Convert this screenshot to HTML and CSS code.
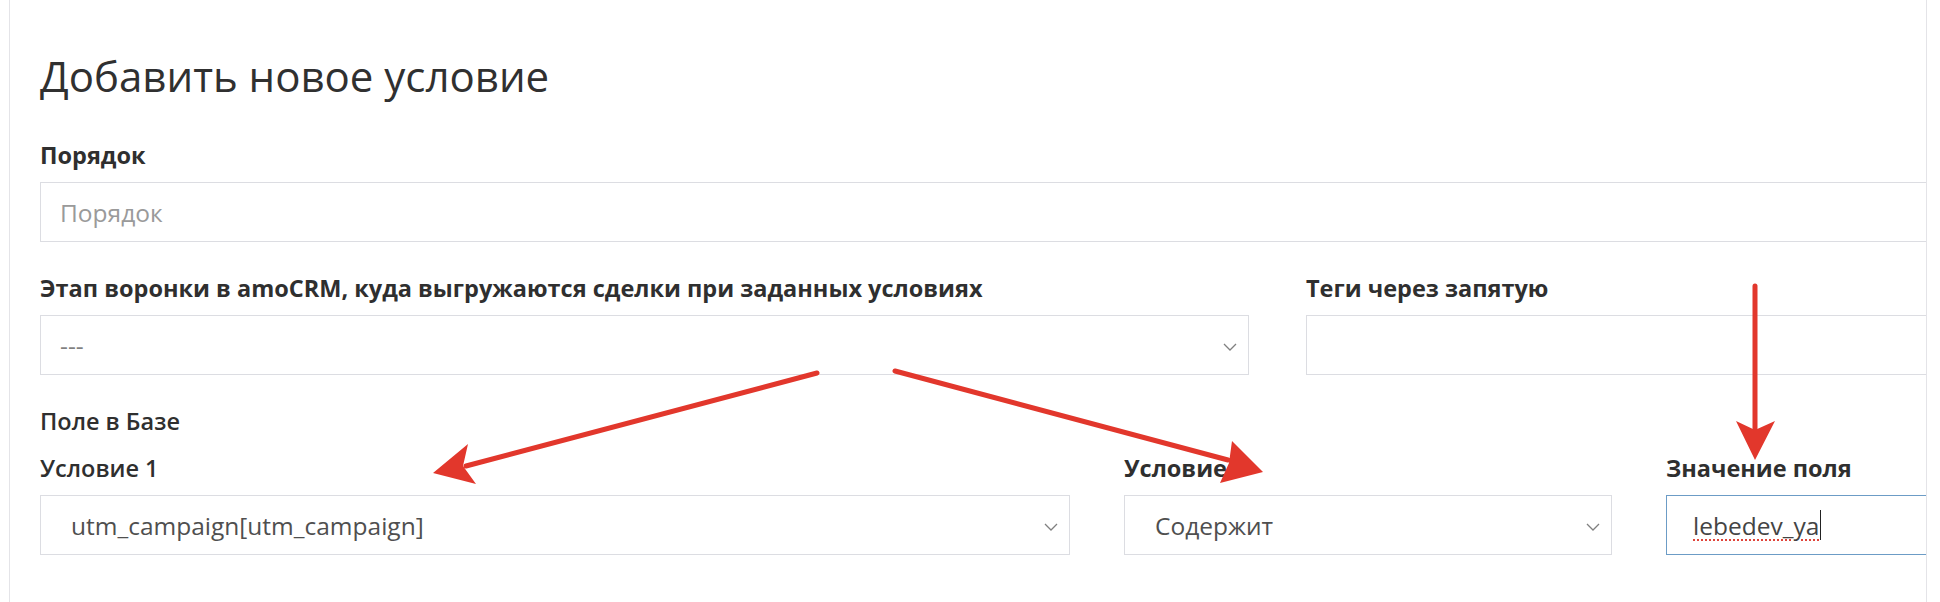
FILE: index.html
```html
<!DOCTYPE html>
<html lang="ru">
<head>
<meta charset="utf-8">
<title>Добавить новое условие</title>
<link rel="stylesheet" href="styles.css">
</head>
<body>
<div class="page">
  <div class="card">
    <h1 class="title">Добавить новое условие</h1>

    <div class="field">
      <div class="label">Порядок</div>
      <div class="control open-right"><span class="placeholder">Порядок</span></div>
    </div>

    <div class="row row-top">
      <div class="field">
        <div class="label">Этап воронки в amoCRM, куда выгружаются сделки при заданных условиях</div>
        <div class="control select"><span class="value dim">---</span>
          <svg class="chev" width="14" height="8" viewBox="0 0 14 8"><polyline points="1,1 7,7 13,1" fill="none" stroke="#808080" stroke-width="1.3"/></svg>
        </div>
      </div>
      <div class="field">
        <div class="label">Теги через запятую</div>
        <div class="control open-right"></div>
      </div>
    </div>

    <div class="label label-medium section">Поле в Базе</div>

    <div class="row row-bottom">
      <div class="field">
        <div class="label label-medium">Условие 1</div>
        <div class="control select wide-pad"><span class="value">utm_campaign[utm_campaign]</span>
          <svg class="chev" width="14" height="8" viewBox="0 0 14 8"><polyline points="1,1 7,7 13,1" fill="none" stroke="#808080" stroke-width="1.3"/></svg>
        </div>
      </div>
      <div class="field">
        <div class="label">Условие</div>
        <div class="control select wide-pad"><span class="value">Содержит</span>
          <svg class="chev" width="14" height="8" viewBox="0 0 14 8"><polyline points="1,1 7,7 13,1" fill="none" stroke="#808080" stroke-width="1.3"/></svg>
        </div>
      </div>
      <div class="field">
        <div class="label">Значение поля</div>
        <div class="control focused open-right"><span class="value typed">lebedev_ya</span><span class="caret"></span></div>
      </div>
    </div>
  </div>

  <svg class="annotations" width="1940" height="602" viewBox="0 0 1940 602">
    <g stroke="#e2372c" stroke-width="5" stroke-linecap="round" fill="none">
      <line x1="817" y1="373" x2="466" y2="466"/>
      <line x1="895" y1="371" x2="1228" y2="460"/>
      <line x1="1755" y1="286" x2="1755" y2="432"/>
    </g>
    <g fill="#e2372c">
      <polygon points="433,473 468,444 463,466 476,484"/>
      <polygon points="1263,472 1232,441 1229,463 1220,483"/>
      <polygon points="1755,460 1736,421 1755,430 1775,421"/>
    </g>
  </svg>
</div>
</body>
</html>
```

FILE: styles.css
```css
* { box-sizing: border-box; }

html, body {
  margin: 0;
  padding: 0;
  background: #ffffff;
}

body {
  font-family: "Open Sans", "Liberation Sans", sans-serif;
  color: #333333;
}

.page {
  position: relative;
  width: 1940px;
  height: 602px;
  overflow: hidden;
}

.card {
  margin-left: 9px;
  width: 1918px;
  height: 602px;
  border-left: 1px solid #e4e4e8;
  border-right: 1px solid #e4e4e8;
  padding: 50px 0 0 30px;
  overflow: hidden;
}

.title {
  margin: 0 0 39px 0;
  font-size: 42px;
  line-height: 52px;
  font-weight: 400;
  color: #303030;
}

.field {
  display: flex;
  flex-direction: column;
  margin-bottom: 32px;
}

.label {
  font-size: 23.5px;
  line-height: 28px;
  font-weight: 700;
  color: #2f2f2f;
  margin-bottom: 13px;
  white-space: nowrap;
}

.label-medium {
  font-weight: 600;
}

.section {
  margin-bottom: 19px;
}

.control {
  position: relative;
  height: 60px;
  border: 1px solid #dcdde2;
  background: #ffffff;
  display: flex;
  align-items: center;
  padding: 0 19px;
  font-size: 24.5px;
  color: #555555;
}

.open-right {
  border-right: 0;
}

.wide-pad {
  padding-left: 30px;
}

.placeholder {
  color: #9a9a9a;
}

.value {
  color: #4f4f4f;
  white-space: nowrap;
}

.dim {
  color: #808080;
}

.chev {
  position: absolute;
  right: 11px;
  top: 27px;
}

.row {
  display: grid;
}

.row-top {
  grid-template-columns: 1209px 1fr;
  column-gap: 57px;
}

.row-bottom {
  grid-template-columns: 1030px 488px 1fr;
  column-gap: 54px;
}

.row-bottom .field {
  margin-bottom: 0;
}

.focused {
  border-color: #6c9cc6;
  padding-left: 26px;
}

.typed {
  text-decoration: underline dotted #e0443a;
  text-underline-offset: 5px;
  text-decoration-thickness: 2px;
  color: #444444;
}

.caret {
  display: inline-block;
  width: 1px;
  height: 30px;
  background: #222222;
  margin-left: 1px;
}

.annotations {
  position: absolute;
  left: 0;
  top: 0;
  pointer-events: none;
}
```
